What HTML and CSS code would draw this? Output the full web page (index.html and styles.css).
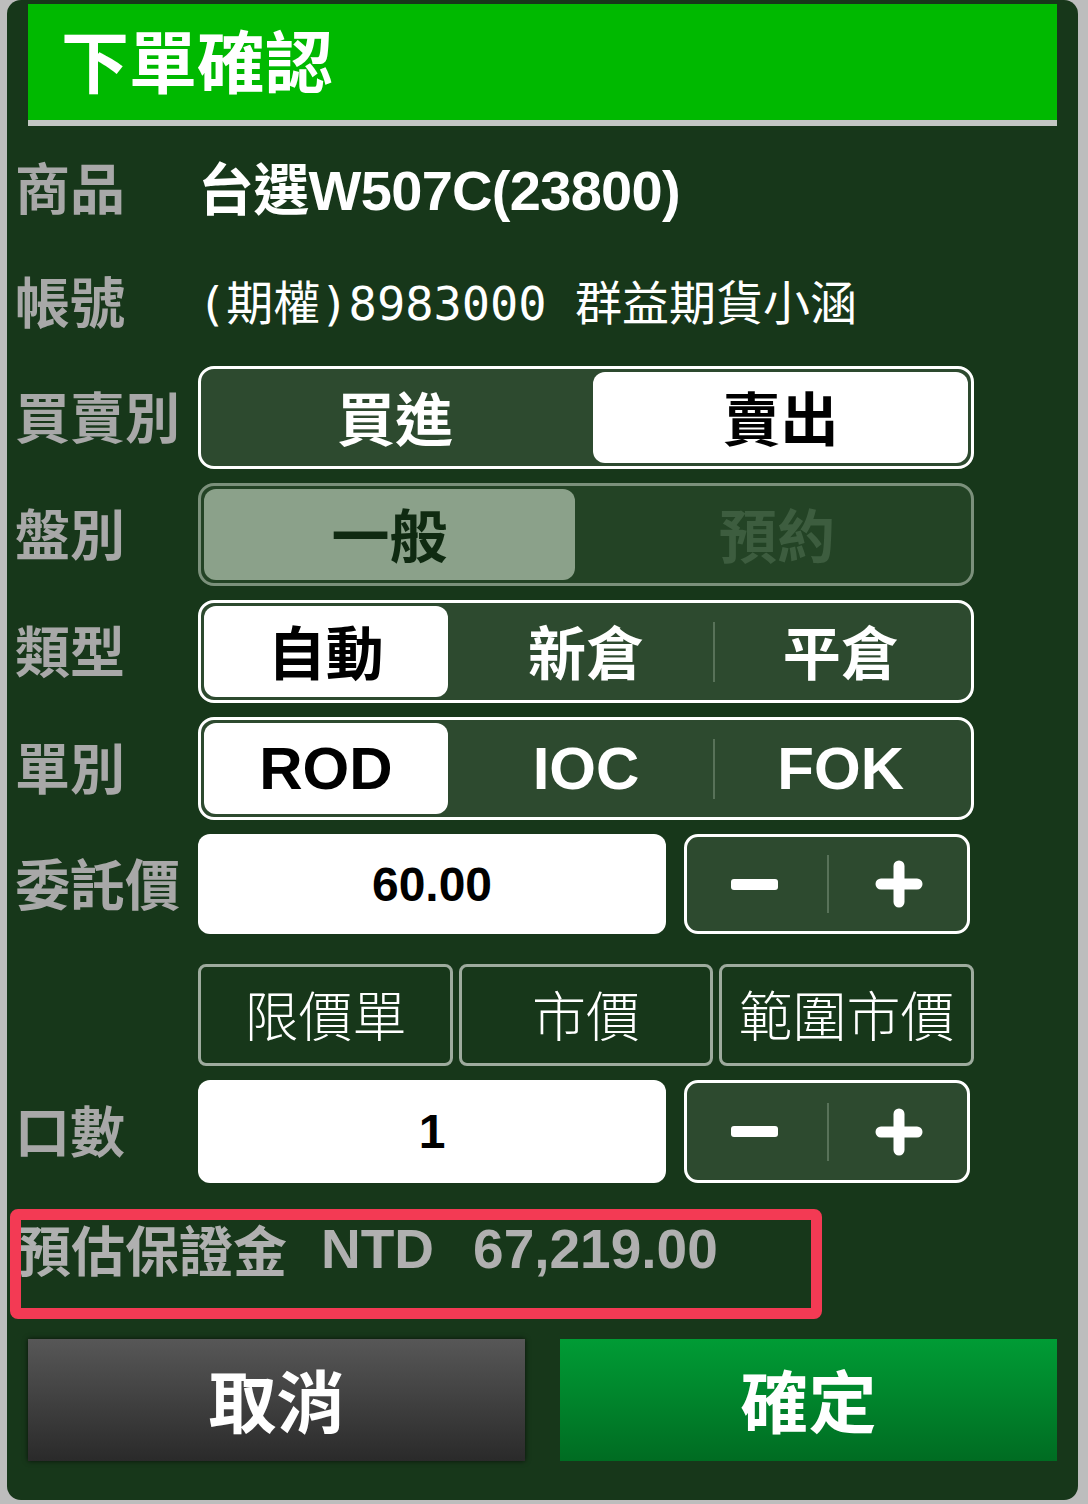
FILE: index.html
```html
<!DOCTYPE html>
<html>
<head>
	<title>下單確認</title>
	<meta charset="utf-8">
	<link rel="stylesheet" href="styles.css">
</head>
<body>
	<div class="panel">
		<div class="title">下單確認</div>
		<div class="form">
			<div class="row info">
				<span class="label">商品</span>
				<span class="product">台選W507C(23800)</span>
			</div>
			<div class="row info">
				<span class="label">帳號</span>
				<span class="account">(期權)8983000 群益期貨小涵</span>
			</div>
			<div class="row">
				<span class="label">買賣別</span>
				<div class="seg two">
					<span>買進</span>
					<span class="on">賣出</span>
				</div>
			</div>
			<div class="row">
				<span class="label">盤別</span>
				<div class="seg two muted">
					<span class="on">一般</span>
					<span class="off">預約</span>
				</div>
			</div>
			<div class="row">
				<span class="label">類型</span>
				<div class="seg three">
					<span class="on">自動</span>
					<span>新倉</span>
					<span class="sep">平倉</span>
				</div>
			</div>
			<div class="row">
				<span class="label">單別</span>
				<div class="seg three latin">
					<span class="on">ROD</span>
					<span>IOC</span>
					<span class="sep">FOK</span>
				</div>
			</div>
			<div class="row short">
				<span class="label">委託價</span>
				<div class="qty">
					<div class="field">60.00</div>
					<div class="stepper">
						<span class="minus-cell"><i class="minus"></i></span>
						<span class="plus-cell">
							<svg width="48" height="48" viewBox="0 0 48 48"><path d="M6 24H42M24 6V42" stroke="#fff" stroke-width="11" stroke-linecap="round" fill="none"/></svg>
						</span>
					</div>
				</div>
			</div>
			<div class="row kinds">
				<span class="label"></span>
				<div class="types">
					<span>限價單</span>
					<span>市價</span>
					<span>範圍市價</span>
				</div>
			</div>
			<div class="row">
				<span class="label">口數</span>
				<div class="qty">
					<div class="field">1</div>
					<div class="stepper">
						<span class="minus-cell"><i class="minus"></i></span>
						<span class="plus-cell">
							<svg width="48" height="48" viewBox="0 0 48 48"><path d="M6 24H42M24 6V42" stroke="#fff" stroke-width="11" stroke-linecap="round" fill="none"/></svg>
						</span>
					</div>
				</div>
			</div>
			<div class="deposit">
				<span>預估保證金</span>
				<span class="num">NTD</span>
				<span class="num amount">67,219.00</span>
			</div>
		</div>
		<div class="actions">
			<div class="btn cancel">取消</div>
			<div class="btn ok">確定</div>
		</div>
	</div>
</body>
</html>
```

FILE: styles.css
```css
* {
	margin: 0;
	padding: 0;
	box-sizing: border-box;
}
body {
	background-color: #bdbdbd;
	font-family: "Noto Sans CJK TC", sans-serif;
}
.panel {
	margin-left: 7px;
	width: 1071px;
	height: 1500px;
	background-color: #17371a;
	border-radius: 14px;
	overflow: hidden;
}
.title {
	margin: 4px 21px 0 21px;
	height: 122px;
	padding-left: 33px;
	background-color: #00b900;
	border-bottom: 6px solid #c3c7c3;
	color: white;
	font-size: 68px;
	font-weight: 700;
	line-height: 110px;
}
.form {
	display: flex;
	flex-direction: column;
	gap: 14px;
	padding: 12px 0 0 8px;
}
.row {
	display: grid;
	grid-template-columns: 183px 776px;
	align-items: center;
	height: 103px;
}
.row.info {
	height: 100px;
}
.row.short {
	height: 100px;
}
.row.kinds {
	height: 102px;
	margin-top: 16px;
}
.label {
	padding-bottom: 6px;
	color: #a8a8a8;
	font-size: 55px;
	font-weight: 700;
	line-height: 1;
}
.product {
	padding-bottom: 6px;
	color: white;
	font-family: "Liberation Sans", "Noto Sans CJK TC", sans-serif;
	font-size: 56px;
	font-weight: 700;
	letter-spacing: -0.7px;
}
.account {
	padding-bottom: 6px;
	color: white;
	font-family: "DejaVu Sans Mono", "Noto Sans CJK TC", monospace;
	font-size: 47px;
	white-space: pre;
}

/* segmented controls */
.seg {
	display: grid;
	height: 100%;
	padding: 3px;
	background-color: #2d4a2f;
	border: 3px solid white;
	border-radius: 16px;
}
.seg.two {
	grid-template-columns: 1fr 1fr;
}
.seg.three {
	grid-template-columns: 1fr 1fr 1fr;
}
.seg span {
	display: flex;
	align-items: center;
	justify-content: center;
	padding-bottom: 4px;
	color: white;
	font-size: 58px;
	font-weight: 700;
	border-radius: 12px;
}
.seg.latin span {
	padding-bottom: 0;
	font-family: "Liberation Sans", sans-serif;
	font-size: 60px;
}
.seg .on {
	background-color: white;
	color: black;
}
.seg span.on:first-child {
	margin-right: 11px;
}
.seg span.on:last-child {
	margin-left: 7px;
}
.seg .sep {
	background: linear-gradient(#587259, #587259) left center / 2px 60px no-repeat;
}
.seg.muted {
	background-color: #234325;
	border-color: #7b907b;
}
.seg.muted .on {
	background-color: #8ba18a;
	color: #0f2a11;
}
.seg.muted .off {
	color: #3d5d3f;
}

/* price / quantity */
.qty {
	display: grid;
	grid-template-columns: 468px 286px;
	gap: 18px;
	height: 100%;
}
.field {
	display: flex;
	align-items: center;
	justify-content: center;
	background-color: white;
	border-radius: 12px;
	color: black;
	font-family: "Liberation Sans", sans-serif;
	font-size: 48px;
	font-weight: 700;
}
.stepper {
	display: grid;
	grid-template-columns: 1fr 1fr;
	background-color: #2d4a2f;
	border: 3px solid white;
	border-radius: 14px;
}
.stepper span {
	display: flex;
	align-items: center;
	justify-content: center;
}
.minus-cell {
	padding-right: 6px;
}
.plus-cell {
	padding-left: 4px;
	background: linear-gradient(#587259, #587259) left center / 2px 58px no-repeat;
}
.minus {
	display: block;
	width: 47px;
	height: 11px;
	background-color: white;
	border-radius: 3px;
}

/* order type buttons */
.types {
	display: grid;
	grid-template-columns: 255px 254px 255px;
	gap: 6px;
	height: 100%;
}
.types span {
	display: flex;
	align-items: center;
	justify-content: center;
	padding-bottom: 4px;
	border: 3px solid #9eab9e;
	border-radius: 8px;
	color: white;
	font-size: 54px;
	font-weight: 300;
}

/* estimated margin, boxed in red */
.deposit {
	position: relative;
	display: flex;
	margin-top: 12px;
	margin-left: -5px;
	width: 812px;
	height: 110px;
	padding: 12px 0 0 7px;
	color: #b0b0b0;
	font-size: 54px;
	font-weight: 700;
	line-height: 56px;
}
.deposit::after {
	content: "";
	position: absolute;
	top: 0;
	left: 0;
	right: 0;
	bottom: 0;
	border: 11px solid #f33a54;
	border-radius: 8px;
}
.deposit .num {
	margin-left: 34px;
	font-family: "Liberation Sans", sans-serif;
	font-size: 55px;
}
.deposit .amount {
	margin-left: 39px;
}

.actions {
	display: flex;
	gap: 35px;
	margin: 20px 21px 0 21px;
}
.btn {
	flex: 1;
	display: flex;
	align-items: center;
	justify-content: center;
	height: 122px;
	padding-bottom: 4px;
	color: white;
	font-size: 68px;
	font-weight: 700;
}
.cancel {
	background: linear-gradient(#575757, #2a2a2a);
	box-shadow: 0 0 5px rgba(0, 0, 0, 0.7);
}
.ok {
	background: linear-gradient(#009c35, #006c22);
}
```
